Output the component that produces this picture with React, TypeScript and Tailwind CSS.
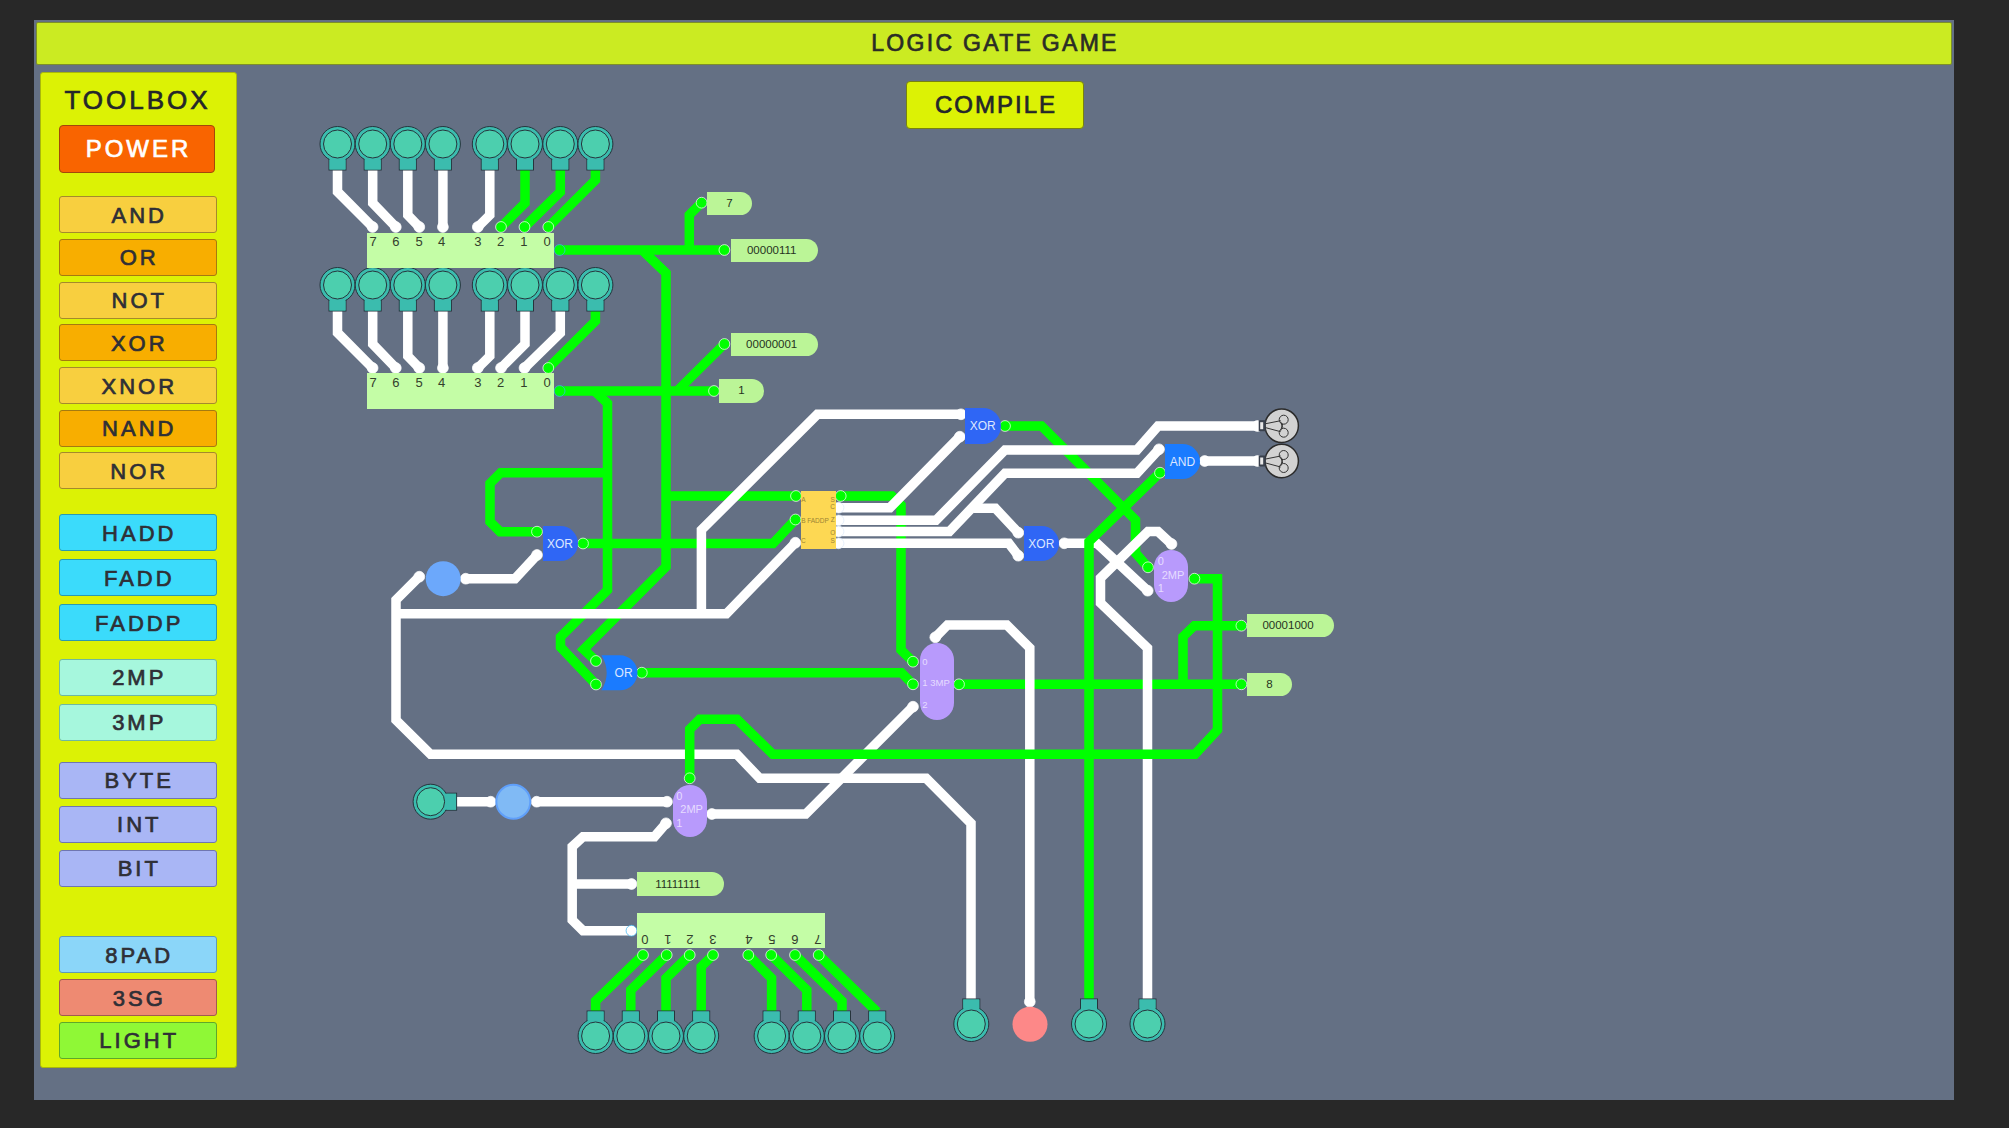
import React from 'react';

// The diagram is drawn in page coordinates, the layer itself starts here
const ORIGIN_X = 34;
const ORIGIN_Y = 66;

type Pt = [number, number];

interface Wire {
  c: 'g' | 'w';
  p: Pt[];
  s?: boolean; // pin at first point
  e?: boolean; // pin at last point
  ring?: string; // colour of the first pin's ring
}

const GREEN = '#00ff00';
const WHITE = '#ffffff';

const padsX = [337.5, 372.7, 407.8, 442.9, 489.8, 525, 560.3, 595.4];
const pinsX = [372.6, 395.8, 419.3, 442.9, 477.8, 501, 524.5, 548.3];
const bendsY = [191.7, 203, 215, 215, 215, 203, 192, 180];

const byteWires = (dy: number, colors: ('g' | 'w')[]): Wire[] =>
  padsX.map((x, i) => ({
    c: colors[i],
    p: [
      [x, 170 + dy],
      [x, bendsY[i] + dy],
      [pinsX[i], 227 + dy],
    ] as Pt[],
    e: true,
  }));

const bottomWires: Wire[] = [
  { c: 'g', p: [[643, 955], [595.6, 1001], [595.6, 1012]], s: true },
  { c: 'g', p: [[666.7, 955], [630.8, 990], [630.8, 1012]], s: true },
  { c: 'g', p: [[689.7, 955], [666, 978.3], [666, 1012]], s: true },
  { c: 'g', p: [[713, 955], [701.2, 966.7], [701.2, 1012]], s: true },
  { c: 'g', p: [[748.3, 955], [771.6, 978.3], [771.6, 1012]], s: true },
  { c: 'g', p: [[771.2, 955], [806.8, 990], [806.8, 1012]], s: true },
  { c: 'g', p: [[795, 955], [842, 1001], [842, 1012]], s: true },
  { c: 'g', p: [[818.7, 955], [877.2, 1012]], s: true },
];

// Order matters: the greens here run under the white wires
const underWires: Wire[] = [
  ...byteWires(0, ['w', 'w', 'w', 'w', 'w', 'g', 'g', 'g']),
  ...byteWires(141, ['w', 'w', 'w', 'w', 'w', 'w', 'w', 'g']),
  { c: 'g', p: [[559.6, 250], [724.4, 250]], s: true, e: true, ring: '#3ab4f2' },
  { c: 'g', p: [[689.3, 250], [689.3, 215], [701.6, 202.7]], e: true },
  { c: 'g', p: [[642, 250], [666, 273], [666, 566.7], [583.6, 649.3], [596, 661]], e: true },
  { c: 'g', p: [[559.6, 391], [714, 391]], s: true, e: true, ring: '#3ab4f2' },
  { c: 'g', p: [[677, 391], [724.4, 344]], e: true },
  { c: 'g', p: [[594.6, 391], [607.5, 403.3], [607.5, 590], [560.5, 637], [560.5, 647], [596, 684.5]], e: true },
  { c: 'g', p: [[607.5, 472.7], [500.7, 472.7], [490, 483.5], [490, 521.7], [500, 531.7], [537, 531.7]], e: true },
  { c: 'g', p: [[666, 496], [796, 496]], e: true },
  { c: 'g', p: [[583, 543.5], [773, 543.5], [795.5, 519.5]], s: true, e: true },
  { c: 'g', p: [[840.7, 496], [892, 496], [901, 505], [901, 650], [913, 661.7]], s: true, e: true },
  { c: 'g', p: [[1005, 426], [1041.5, 426], [1135.5, 520], [1135.5, 553], [1148, 567.3]], s: true, e: true },
  { c: 'g', p: [[641.8, 672.7], [901.4, 672.7], [913, 684.3]], s: true, e: true },
  { c: 'g', p: [[959, 684.3], [1241.4, 684.3]], s: true, e: true },
  { c: 'g', p: [[1183, 684.3], [1183, 636.7], [1194.4, 625.7], [1241.4, 625.7]], e: true },
];

const whiteWires: Wire[] = [
  { c: 'w', p: [[465.7, 578.7], [515, 578.7], [537, 555]], s: true, e: true },
  {
    c: 'w',
    p: [[419.3, 576.7], [396, 600], [396, 720], [430.6, 754.3], [736.8, 754.3], [759.7, 778.3], [926.2, 778.3], [971, 823.3], [971, 1001]],
    s: true,
  },
  { c: 'w', p: [[396, 613.7], [726.4, 613.7], [795.4, 542.7]], e: true },
  { c: 'w', p: [[701.4, 613.7], [701.4, 530], [817.4, 414.3], [961, 414.3]], e: true },
  { c: 'w', p: [[838.5, 507.7], [890, 507.7], [959.8, 436.7]], s: true, e: true, ring: '#dce9fb' },
  { c: 'w', p: [[838.5, 520.3], [936, 520.3], [1005, 450], [1137, 450], [1158, 426], [1257.5, 426]], s: true, e: true, ring: '#dce9fb' },
  { c: 'w', p: [[838.5, 531.5], [949.4, 531.5], [1005, 473.3], [1137, 473.3], [1159, 449.3]], s: true, e: true, ring: '#dce9fb' },
  { c: 'w', p: [[838.5, 543.3], [1008.8, 543.3], [1018.3, 555.7]], s: true, e: true, ring: '#dce9fb' },
  { c: 'w', p: [[973.5, 508.3], [995.4, 508.3], [1018.3, 532.7]], e: true },
  { c: 'w', p: [[1064.2, 543.3], [1096.8, 543.3], [1147.7, 590.7]], s: true, e: true },
  { c: 'w', p: [[1147.5, 1001], [1147.5, 648], [1100.5, 603], [1100.5, 578], [1148, 531.5], [1158, 531.5], [1171.5, 544]], e: true },
  { c: 'w', p: [[1204.7, 461], [1257.5, 461]], s: true, e: true },
  { c: 'w', p: [[935.3, 637.3], [947.5, 625], [1006.8, 625], [1029.8, 648], [1029.8, 1001.7]], s: true, e: true },
  { c: 'w', p: [[913, 706.7], [805.7, 814], [711.9, 814]], s: true, e: true },
  { c: 'w', p: [[457, 801.7], [490.7, 801.7]], e: true },
  { c: 'w', p: [[536.6, 801.7], [667, 801.7]], s: true, e: true },
  { c: 'w', p: [[631.5, 930.7], [583, 930.7], [572.2, 920], [572.2, 846.7], [583, 836.7], [654.5, 836.7], [666, 823.3]], s: true, e: true, ring: '#3ab4f2' },
  { c: 'w', p: [[572.2, 884], [631.5, 884]], e: true },
];

// ...and these run over them
const overWires: Wire[] = [
  {
    c: 'g',
    p: [[1194.4, 578.7], [1217.5, 578.7], [1217.5, 730], [1195, 754.3], [772.9, 754.3], [737, 719.3], [699.6, 719.3], [689.7, 729.3], [689.7, 778.3]],
    s: true,
    e: true,
  },
  { c: 'g', p: [[1160, 472.7], [1089, 541.7], [1089, 1001]], s: true },
  ...bottomWires,
];

const wireEnds = (wires: Wire[]) =>
  wires.flatMap((w) => [
    ...(w.s ? [{ at: w.p[0], fill: w.c, ring: w.ring ?? WHITE }] : []),
    ...(w.e ? [{ at: w.p[w.p.length - 1], fill: w.c, ring: WHITE }] : []),
  ]);

const WireGroup = ({ wires }: { wires: Wire[] }) => (
  <>
    {wires.map((w, i) => (
      <polyline
        key={i}
        points={w.p.map((pt) => pt.join(',')).join(' ')}
        fill="none"
        stroke={w.c === 'g' ? GREEN : WHITE}
        strokeWidth={9.5}
        strokeLinejoin="miter"
      />
    ))}
    {wireEnds(wires).map((pin, i) => (
      <circle
        key={i}
        cx={pin.at[0]}
        cy={pin.at[1]}
        r={5.4}
        fill={pin.fill === 'g' ? GREEN : WHITE}
        stroke={pin.ring}
        strokeWidth={0.7}
      />
    ))}
  </>
);

// A switch or lamp pad: ringed disc with a short neck pointing at its wire
const Pad = ({ x, y, dir }: { x: number; y: number; dir: 'down' | 'up' | 'right' }) => {
  const neck =
    dir === 'down'
      ? { x: x - 8.5, y: y + 10, width: 17, height: 16 }
      : dir === 'up'
        ? { x: x - 8.5, y: y - 25, width: 17, height: 15 }
        : { x: x + 10, y: y - 8.5, width: 16, height: 17 };
  return (
    <g stroke="#26343c" strokeWidth={1}>
      <rect {...neck} fill="#3bbcae" />
      <circle cx={x} cy={y} r={17.5} fill="#3bbcae" />
      {/* wipes the disc's outline where the neck joins it */}
      <rect
        x={neck.x + 0.5}
        y={neck.y + 0.5}
        width={neck.width - 1}
        height={neck.height - 1}
        fill="#3bbcae"
        stroke="none"
      />
      <circle cx={x} cy={y} r={14} fill="#4ccfae" />
    </g>
  );
};

const Bulb = ({ x, y }: { x: number; y: number }) => (
  <g>
    <circle cx={x} cy={y} r={16.7} fill="#d2d2d2" stroke="#2b2b2b" strokeWidth={1.5} />
    <rect x={x - 23} y={y - 5.5} width={7} height={11} fill="#39404c" />
    <rect x={x - 21.5} y={y - 3.5} width={3} height={7} fill="#e8e8e8" />
    <g fill="none" stroke="#333333" strokeWidth={1}>
      <path d={`M${x - 16} ${y - 2} L${x - 1} ${y - 5} M${x - 16} ${y + 2} L${x - 1} ${y + 6} M${x - 1} ${y - 4} L${x + 1} ${y + 2} M${x - 1} ${y + 5} L${x + 1} ${y - 2}`} />
      <circle cx={x + 2} cy={y - 6} r={4.5} />
      <circle cx={x + 2} cy={y + 7} r={4.5} />
    </g>
  </g>
);

// Text centred on a page coordinate of the diagram
const Tag = ({ x, y, className, children }: { x: number; y: number; className: string; children: React.ReactNode }) => (
  <span
    className={`absolute -translate-x-1/2 -translate-y-1/2 whitespace-nowrap leading-none ${className}`}
    style={{ left: x - ORIGIN_X, top: y - ORIGIN_Y }}
  >
    {children}
  </span>
);

// A gate, label tag or byte block body
const Body = ({ x, y, w, h, className }: { x: number; y: number; w: number; h: number; className: string }) => (
  <div className={`absolute ${className}`} style={{ left: x - ORIGIN_X, top: y - ORIGIN_Y, width: w, height: h }} />
);

const outTags = [
  { x: 707, y: 191.7, w: 45, h: 23.3, text: '7', tx: 729.5 },
  { x: 730.7, y: 238.7, w: 87, h: 23.3, text: '00000111', tx: 771.7 },
  { x: 730.7, y: 332.7, w: 87, h: 23.3, text: '00000001', tx: 771.7 },
  { x: 719, y: 379, w: 45, h: 23.7, text: '1', tx: 741.5 },
  { x: 1247, y: 614, w: 87, h: 23.3, text: '00001000', tx: 1288 },
  { x: 1247, y: 672.7, w: 45, h: 23.3, text: '8', tx: 1269.5 },
  { x: 636.9, y: 872.3, w: 87, h: 23.4, text: '11111111', tx: 677.8 },
];

const xorGates = [
  { x: 542.9, y: 526, tx: 560, ty: 544 },
  { x: 965, y: 408.3, tx: 982.7, ty: 426.3 },
  { x: 1023.7, y: 526, tx: 1041.3, ty: 544 },
];

const muxes = [
  { x: 1154, y: 550, h: 52, pins: [['0', 1160.7, 561], ['1', 1160.7, 588.3]], name: '2MP', tx: 1173, ty: 575, size: 'text-[11px]' },
  { x: 672.5, y: 785, h: 51.7, pins: [['0', 679.4, 796], ['1', 679.4, 823.3]], name: '2MP', tx: 691.6, ty: 809.3, size: 'text-[11px]' },
  { x: 919.6, y: 642.7, h: 77.3, pins: [['0', 925, 661.7], ['1', 925, 683.3], ['2', 925, 705]], name: '3MP', tx: 940, ty: 683, size: 'text-[9.5px]' },
] as const;

const faddpPins: [string, number, number][] = [
  ['A', 803.3, 500],
  ['B', 803.3, 520.7],
  ['C', 803.3, 541],
  ['S', 832.7, 500],
  ['C', 832.7, 506.7],
  ['Z', 832.7, 520],
  ['O', 832.7, 533.3],
  ['S', 832.7, 540.7],
];

const digitsTop = ['7', '6', '5', '4', '3', '2', '1', '0'];
const digitsTopX = [373, 395.8, 419, 441.7, 477.8, 500.6, 523.8, 547];
const digitsBottom = ['0', '1', '2', '3', '4', '5', '6', '7'];
const digitsBottomX = [644.5, 667.5, 690, 713, 749, 772, 795, 817.9];

const Diagram = () => (
  <div className="absolute inset-0">
    <svg className="absolute inset-0" width={1919} height={1034} viewBox={`${ORIGIN_X} ${ORIGIN_Y} 1919 1034`}>
      <WireGroup wires={underWires} />
      <WireGroup wires={whiteWires} />
      <WireGroup wires={overWires} />
      {padsX.map((x) => (
        <Pad key={x} x={x} y={144} dir="down" />
      ))}
      {padsX.map((x) => (
        <Pad key={x} x={x} y={285} dir="down" />
      ))}
      {[595.6, 630.8, 666, 701.2, 771.6, 806.8, 842, 877.2].map((x) => (
        <Pad key={x} x={x} y={1036} dir="up" />
      ))}
      {[971.3, 1089, 1147.5].map((x) => (
        <Pad key={x} x={x} y={1024} dir="up" />
      ))}
      <Pad x={430.6} y={801.7} dir="right" />
      <circle cx={443.2} cy={578.7} r={17.5} fill="#6ca8fb" />
      <circle cx={513.3} cy={801.7} r={17} fill="#80baf5" stroke="#5f9ffa" strokeWidth={2} />
      <circle cx={1030} cy={1024.3} r={17.5} fill="#fd8888" />
      {/* OR gate has a hollow back, so it can't be a plain rounded box */}
      <path d="M601.4 655.3 H620 A17.5 17.5 0 0 1 620 690.3 H601.4 Q612 673 601.4 655.3 Z" fill="#1a7bff" />
      <Bulb x={1281.7} y={425.7} />
      <Bulb x={1281.7} y={461} />
    </svg>

    <Body x={367} y={232.7} w={187.3} h={35} className="bg-[#c4fda6]" />
    <Body x={367} y={373.3} w={187.3} h={35.4} className="bg-[#c4fda6]" />
    <Body x={636.9} y={913.3} w={187.9} h={35} className="bg-[#c4fda6]" />

    {digitsTop.map((d, i) => (
      <Tag key={i} x={digitsTopX[i]} y={241} className="text-[13px] text-[#33402c]">
        {d}
      </Tag>
    ))}
    {digitsTop.map((d, i) => (
      <Tag key={i} x={digitsTopX[i]} y={382} className="text-[13px] text-[#33402c]">
        {d}
      </Tag>
    ))}
    {digitsBottom.map((d, i) => (
      <Tag key={i} x={digitsBottomX[i]} y={939} className="text-[13px] text-[#33402c] rotate-180">
        {d}
      </Tag>
    ))}

    {outTags.map((t) => (
      <React.Fragment key={t.text}>
        <Body x={t.x} y={t.y} w={t.w} h={t.h} className="bg-[#bbf597] rounded-r-[12px]" />
        <Tag x={t.tx} y={t.y + t.h / 2 + 0.5} className="text-[11.5px] text-[#26331e]">
          {t.text}
        </Tag>
      </React.Fragment>
    ))}

    {xorGates.map((g) => (
      <React.Fragment key={g.x}>
        <Body x={g.x} y={g.y} w={35.5} h={35.4} className="bg-[#2f66f5] rounded-r-[18px]" />
        <Tag x={g.tx} y={g.ty} className="text-[12px] text-[#dce6ff]">
          XOR
        </Tag>
      </React.Fragment>
    ))}

    <Body x={1164.5} y={443.7} w={35.5} h={35.6} className="bg-[#1a7bff] rounded-r-[18px]" />
    <Tag x={1182.5} y={461.7} className="text-[12px] text-[#dce6ff]">
      AND
    </Tag>
    <Tag x={623.6} y={672.7} className="text-[12px] text-[#dce6ff]">
      OR
    </Tag>

    {muxes.map((m) => (
      <React.Fragment key={m.x}>
        <Body x={m.x} y={m.y} w={34.4} h={m.h} className="bg-[#b89afc] rounded-[17px]" />
        {m.pins.map(([t, x, y]) => (
          <Tag key={t} x={x} y={y} className={`${m.size} text-[#e6dcff]`}>
            {t}
          </Tag>
        ))}
        <Tag x={m.tx} y={m.ty} className={`${m.size} text-[#e6dcff]`}>
          {m.name}
        </Tag>
      </React.Fragment>
    ))}

    <Body x={801} y={491} w={35.3} h={58.3} className="bg-[#fdd853]" />
    {faddpPins.map(([t, x, y]) => (
      <Tag key={`${t}${y}`} x={x} y={y} className="text-[6.5px] text-[#9c8536]">
        {t}
      </Tag>
    ))}
    <Tag x={818} y={520.7} className="text-[6.5px] text-[#9c8536]">
      FADDP
    </Tag>
  </div>
);

const btnBase =
  'h-[37px] w-[157.5px] flex items-center justify-center pl-[3px] pt-[1px] rounded-[3px] border text-[22px] tracking-[3px] text-[#2f2f36] [-webkit-text-stroke:0.7px_#2f2f36]';

const groups = [
  {
    className: 'mt-[23.3px] gap-[5.7px]',
    items: [
      ['AND', 'bg-[#f8cf3f] border-[#a58a2c]'],
      ['OR', 'bg-[#f8ae00] border-[#a57a10]'],
      ['NOT', 'bg-[#f8cf3f] border-[#a58a2c]'],
      ['XOR', 'bg-[#f8ae00] border-[#a57a10]'],
      ['XNOR', 'bg-[#f8cf3f] border-[#a58a2c]'],
      ['NAND', 'bg-[#f8ae00] border-[#a57a10]'],
      ['NOR', 'bg-[#f8cf3f] border-[#a58a2c]'],
    ],
  },
  {
    className: 'mt-[25px] gap-[8px]',
    items: [
      ['HADD', 'bg-[#3bdbfb] border-[#2a9ab0]'],
      ['FADD', 'bg-[#3bdbfb] border-[#2a9ab0]'],
      ['FADDP', 'bg-[#3bdbfb] border-[#2a9ab0]'],
    ],
  },
  {
    className: 'mt-[17.5px] gap-[8px]',
    items: [
      ['2MP', 'bg-[#a6f7dd] border-[#6fb8a0]'],
      ['3MP', 'bg-[#a6f7dd] border-[#6fb8a0]'],
    ],
  },
  {
    className: 'mt-[21px] gap-[7px]',
    items: [
      ['BYTE', 'bg-[#a9b6f5] border-[#6f76b0]'],
      ['INT', 'bg-[#a9b6f5] border-[#6f76b0]'],
      ['BIT', 'bg-[#a9b6f5] border-[#6f76b0]'],
    ],
  },
  {
    className: 'mt-[49.5px] gap-[5.7px]',
    items: [
      ['8PAD', 'bg-[#8bd6f9] border-[#5f9ab8]'],
      ['3SG', 'bg-[#ee8a72] border-[#a05a50]'],
      ['LIGHT', 'bg-[#8ff836] border-[#5fa82a]'],
    ],
  },
];

const Toolbox = () => (
  <aside className="relative ml-[6px] mt-[6px] h-[996px] w-[197px] justify-self-start rounded-[3px] border border-[#a9b80a] bg-[#dcf205] pl-[18px]">
    <div className="flex h-[52px] w-[157px] items-center justify-center pt-[3px] text-[26px] tracking-[3px] text-[#24262a] [-webkit-text-stroke:0.7px_#24262a]">
      TOOLBOX
    </div>
    <button className="flex h-[48px] w-[156px] items-center justify-center rounded-[4px] border border-[#a3480a] bg-[#f96400] pl-[3px] text-[24px] tracking-[3px] text-white [-webkit-text-stroke:0.7px_#ffffff]">
      POWER
    </button>
    {groups.map((g) => (
      <div key={g.items[0][0]} className={`flex flex-col ${g.className}`}>
        {g.items.map(([name, color]) => (
          <button key={name} className={`${btnBase} ${color}`}>
            {name}
          </button>
        ))}
      </div>
    ))}
  </aside>
);

export default function App() {
  return (
    <div className="h-[1128px] w-[2009px] overflow-hidden bg-[#282828] pl-[34px] pt-[20px] font-['Liberation_Sans',Arial,sans-serif]">
      <div className="flex h-[1080px] w-[1920px] flex-col bg-[#647084]">
        <div className="px-[2px] pb-[1px] pt-[2px]">
          <header className="flex h-[43px] items-center justify-center rounded-[2px] border border-[#7d8f2a] bg-[#cbeb22] pl-[2px] text-[23px] tracking-[2.3px] text-[#2a2c26] [-webkit-text-stroke:0.7px_#2a2c26]">
            LOGIC GATE GAME
          </header>
        </div>
        <div className="relative grid flex-1 grid-cols-[1fr_180px_1fr] items-start">
          <Diagram />
          <Toolbox />
          <button className="relative mt-[15px] flex h-[48px] w-[178px] items-center justify-center justify-self-end rounded-[4px] border border-[#77820f] bg-[#dcf205] pl-[2px] text-[24px] tracking-[2px] text-[#24262a] [-webkit-text-stroke:0.7px_#24262a]">
            COMPILE
          </button>
        </div>
      </div>
    </div>
  );
}
